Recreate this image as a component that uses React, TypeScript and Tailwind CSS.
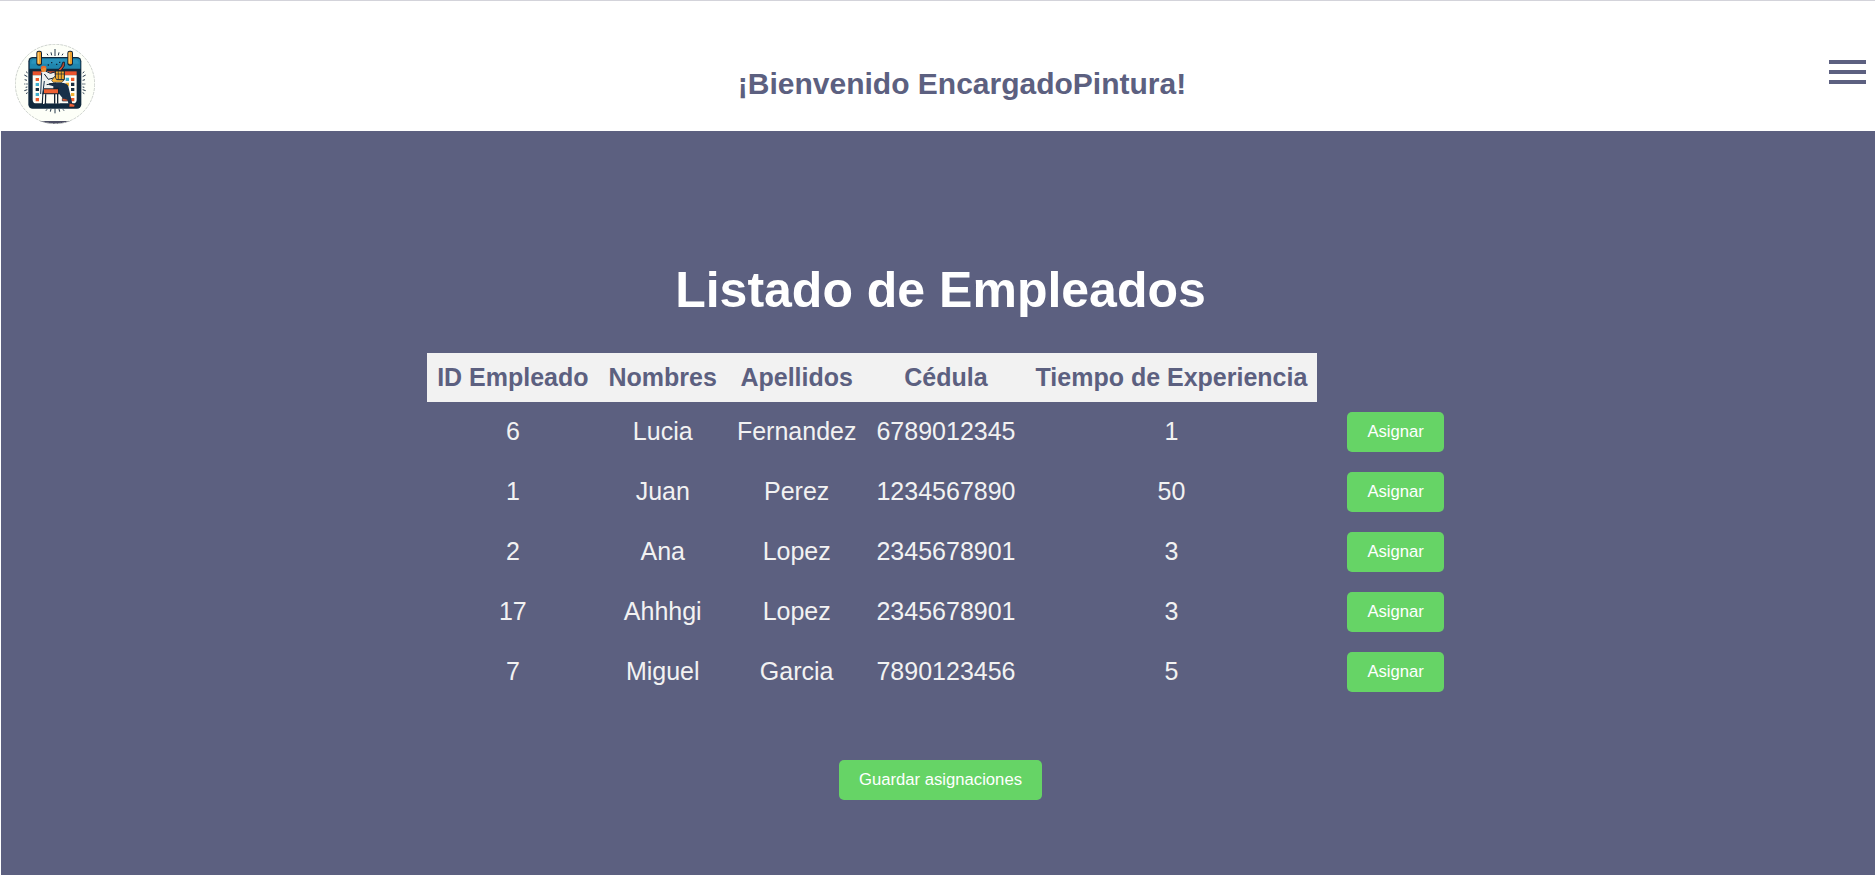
const employees = [
  { id: 6, first: "Lucia", last: "Fernandez", doc: "6789012345", years: 1 },
  { id: 1, first: "Juan", last: "Perez", doc: "1234567890", years: 50 },
  { id: 2, first: "Ana", last: "Lopez", doc: "2345678901", years: 3 },
  { id: 17, first: "Ahhhgi", last: "Lopez", doc: "2345678901", years: 3 },
  { id: 7, first: "Miguel", last: "Garcia", doc: "7890123456", years: 5 },
];

const headings = ["ID Empleado", "Nombres", "Apellidos", "Cédula", "Tiempo de Experiencia"];

function Logo() {
  return (
    <svg viewBox="45 42 240 240" className="h-20 w-20 shrink-0">
      <defs>
        <clipPath id="disc">
          <circle cx="165" cy="162" r="120" />
        </clipPath>
      </defs>
      <g clipPath="url(#disc)">
        <rect x="45" y="42" width="240" height="240" fill="#fdfff8" />
        <rect x="100" y="273" width="130" height="12" fill="#4c4d63" />
        {/* calendar */}
        <rect x="85" y="81" width="159" height="155" rx="13" fill="#10283c" />
        <path d="M99 85h132q10 0 10 10v21H89V95q0-10 10-10z" fill="#1f86ae" />
        <path d="M94 96q3-8 10-8h120q8 0 12 8v5H94z" fill="#2b93bb" />
        <rect x="98" y="124" width="132" height="12" fill="#e9532e" />
        <path d="M98 136h132v73q0 11-11 11H109q-11 0-11-11z" fill="#fdfdf5" />
        {/* date squares */}
        <path d="M107 159h10v9h-10zM197 143h10v10h-10zM107 189h10v9h-10zM197 189h10v9h-10z" fill="#3fb0d0" />
        <path d="M107 144h10v9h-10zM213 143h10v10h-10zM107 204h10v10h-10zM213 204h10v10h-10z" fill="#ef5a29" />
        <path d="M107 174h10v9h-10zM213 158h10v10h-10zM213 174h10v9h-10z" fill="#172d40" />
        <path d="M197 158h10v10h-10zM213 189h10v9h-10z" fill="#f2b233" />
        {/* binder rings */}
        <rect x="109" y="62" width="17" height="45" rx="7" fill="#142333" />
        <rect x="112" y="65" width="11" height="38" rx="4" fill="#f0a02c" />
        <rect x="113" y="67" width="4" height="33" rx="2" fill="#ffc968" />
        <rect x="202" y="62" width="17" height="45" rx="7" fill="#142333" />
        <rect x="205" y="65" width="11" height="38" rx="4" fill="#f0a02c" />
        <rect x="206" y="67" width="4" height="33" rx="2" fill="#ffc968" />
        <path d="M153 98h4M168 103h4M177 97h4M143 105h4" stroke="#10283c" strokeWidth="4" />
        {/* lower panel between the stool legs */}
        <path d="M140 191h40v29h-40z" fill="#fdfdf5" />
        {/* legs and shoes */}
        <path d="M133 160l50-2q19 0 22 11l12 52-10 3-17-43-57-4z" fill="#17304a" />
        <path d="M176 174l22 4 3 30-9 2-16-20z" fill="#17304a" />
        <path d="M187 205l14 3q4 3 1 5h-15zM208 219l14 4q5 5 1 8h-16z" fill="#ef6035" stroke="#142333" strokeWidth="2" />
        {/* stool */}
        <path d="M128 173h49v20h-49z" fill="#142333" />
        <path d="M132 178h42v12h-42z" fill="#ee6032" />
        <path d="M129 191l-2 31M137 193l-1 29M164 192v29M173 192v29" stroke="#142333" strokeWidth="4" />
        <path d="M133 193l-2 29" stroke="#fdfdf5" strokeWidth="4" />
        {/* torso */}
        <path d="M124 126l14-4 15 8 10-3 4 20-18 6-2 12 13 4v6h-28l-8 20-4-2z" fill="#eef1ef" />
        <path d="M125 128l-3 64M133 153l-5 40" stroke="#17304a" strokeWidth="3" fill="none" />
        <path d="M133 132l12 16 19-5" fill="none" stroke="#142333" strokeWidth="3" />
        <path d="M136 123l15 7 17-5" fill="none" stroke="#142333" strokeWidth="3" />
        <path d="M140 164l28-5" fill="none" stroke="#142333" strokeWidth="3" />
        {/* head */}
        <circle cx="131" cy="118" r="8" fill="#ef8a2f" />
        <path d="M122 116q0-9 9-9 8 0 9 7l-9-1-4 4z" fill="#e9672a" />
        {/* brush and paint box */}
        <path d="M173 121l12-13 3-11 5-1v12l-11 15z" fill="#c94b2f" stroke="#142333" strokeWidth="3" />
        <path d="M166 123h27v26h-27z" fill="#f3ac2e" stroke="#142333" strokeWidth="3" />
        <path d="M175 124v25M184 124v25M166 132h27" stroke="#142333" strokeWidth="2" />
        <path d="M155 151l9-12 6 10 22 1-6 7h-27z" fill="#f6b33c" stroke="#142333" strokeWidth="2" />
      </g>
      {/* rays */}
      <g stroke="#26384a" strokeWidth="3">
        <path d="M165 57v21M153 67l2 9M177 67l-2 9M141 71l3 5M189 71l-3 5" />
        <path d="M165 235v15M153 237l-2 8M177 237l2 8M141 238l-3 4M189 238l3 4" />
        <path d="M78 125l5 4M73 135l9 5M74 149l7 2M73 162h3M79 162h4M77 172l5-1M73 182l9-3M78 191l5-3" />
        <path d="M253 125l-5 4M257 135l-9 5M255 149l-7 2M256 162h-3M251 162h-4M253 172l-5-1M257 182l-9-3M253 191l-5-3" />
      </g>
      <circle cx="165" cy="162" r="119" fill="none" stroke="#c5cac6" strokeWidth="2.5" strokeDasharray="9 3" />
    </svg>
  );
}

const buttonClass =
  "block h-10 cursor-pointer rounded-[5px] bg-[#66d466] px-5 text-[16.667px] leading-5 text-white";

export default function App() {
  return (
    <div className="flex h-[875px] flex-col overflow-hidden bg-white font-['Liberation_Sans',Arial,sans-serif]">
      <header className="flex h-[131px] shrink-0 items-start justify-between border-t border-[#d3d3da] pr-[9px] pl-[15px]">
        <div className="pt-[43px]">
          <Logo />
        </div>
        <h1 className="pt-[66px] text-[30px] leading-[34px] font-bold text-[#5c6080]">
          ¡Bienvenido EncargadoPintura!
        </h1>
        <button aria-label="Menú" className="mt-[59px] flex w-[37px] flex-col gap-[6px]">
          <span className="h-1 w-full bg-[#5c6080]" />
          <span className="h-1 w-full bg-[#5c6080]" />
          <span className="h-1 w-full bg-[#5c6080]" />
        </button>
      </header>
      <main className="ml-px flex flex-1 flex-col items-center bg-[#5c6080] pt-[130px] pl-[5px]">
        <h2 className="text-[50px] leading-[58px] font-bold text-white">Listado de Empleados</h2>
        <table className="mt-[34px] border-collapse text-center text-[25px] leading-[29px] text-[#f2f2f2]">
          <thead>
            <tr>
              {headings.map((h) => (
                <th key={h} className="bg-[#f2f2f2] p-[10px] font-bold whitespace-nowrap text-[#5c6080]">
                  {h}
                </th>
              ))}
            </tr>
          </thead>
          <tbody>
            {employees.map((e) => (
              <tr key={e.id} className="h-[60px]">
                <td className="px-[10px] pb-[2px]">{e.id}</td>
                <td className="px-[10px] pb-[2px]">{e.first}</td>
                <td className="px-[10px] pb-[2px]">{e.last}</td>
                <td className="px-[10px] pb-[2px]">{e.doc}</td>
                <td className="px-[10px] pb-[2px]">{e.years}</td>
                <td className="pr-[10px] pl-[30px]">
                  <button className={buttonClass}>Asignar</button>
                </td>
              </tr>
            ))}
          </tbody>
        </table>
        <div className="mt-[58px]">
          <button className={buttonClass}>Guardar asignaciones</button>
        </div>
      </main>
    </div>
  );
}
